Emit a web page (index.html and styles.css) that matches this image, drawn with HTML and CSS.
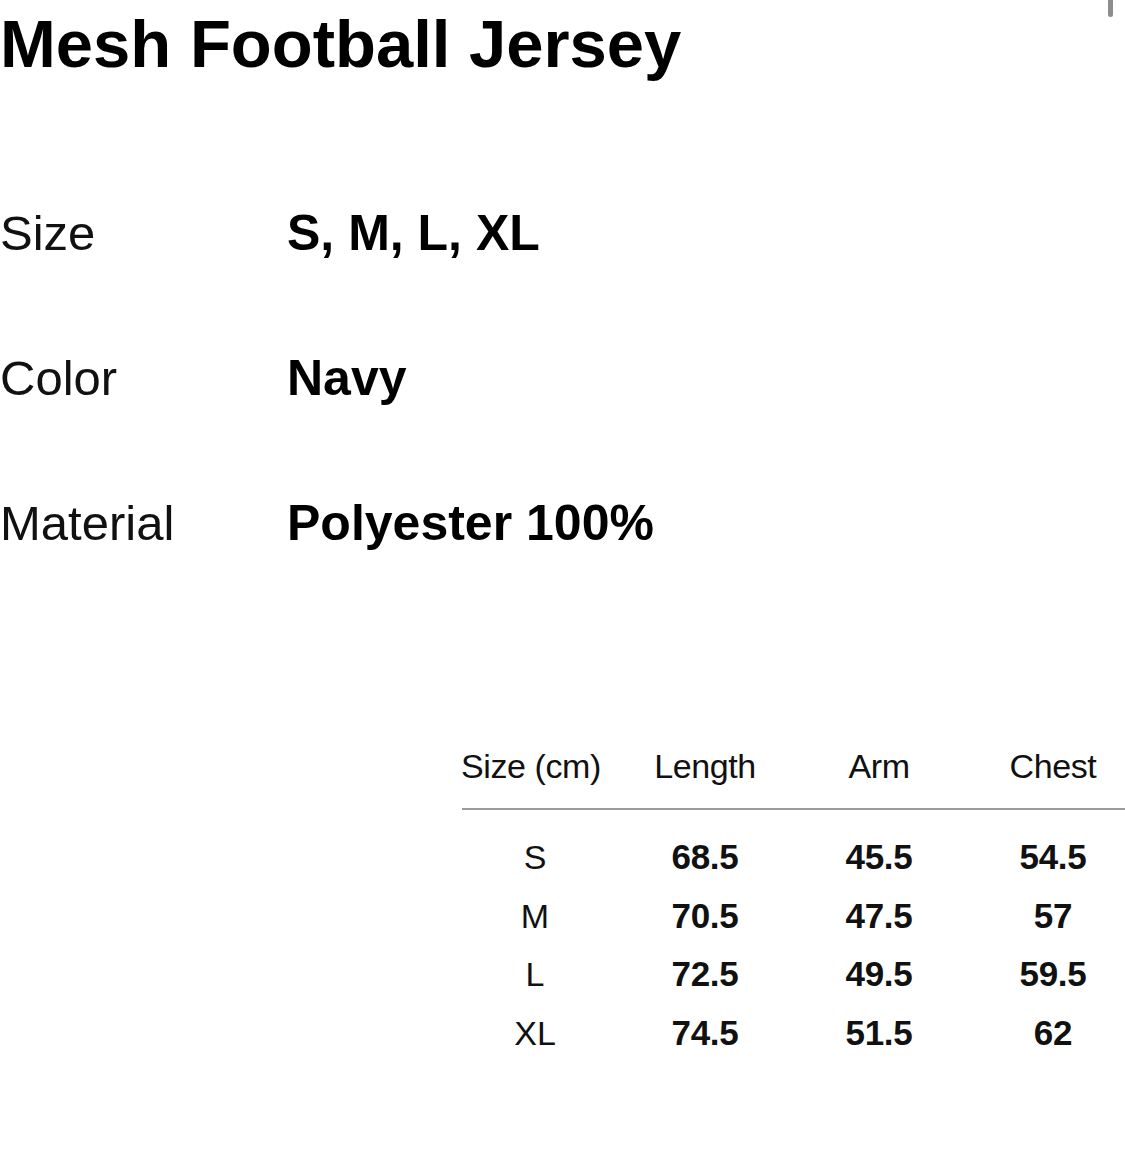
FILE: index.html
```html
<!DOCTYPE html>
<html lang="en">
<head>
<meta charset="utf-8">
<title>Mesh Football Jersey</title>
<link rel="stylesheet" href="styles.css">
</head>
<body>
<div class="scroll-indicator"></div>
<main class="page">
  <h1 class="title">Mesh Football Jersey</h1>

  <dl class="specs">
    <div class="spec-row">
      <dt class="spec-label">Size</dt>
      <dd class="spec-value">S, M, L, XL</dd>
    </div>
    <div class="spec-row">
      <dt class="spec-label">Color</dt>
      <dd class="spec-value">Navy</dd>
    </div>
    <div class="spec-row">
      <dt class="spec-label">Material</dt>
      <dd class="spec-value">Polyester 100%</dd>
    </div>
  </dl>

  <section class="size-table">
    <div class="table-row table-head">
      <div class="cell">Size (cm)</div>
      <div class="cell">Length</div>
      <div class="cell">Arm</div>
      <div class="cell">Chest</div>
    </div>
    <div class="divider"></div>
    <div class="table-row">
      <div class="cell size">S</div>
      <div class="cell num">68.5</div>
      <div class="cell num">45.5</div>
      <div class="cell num">54.5</div>
    </div>
    <div class="table-row">
      <div class="cell size">M</div>
      <div class="cell num">70.5</div>
      <div class="cell num">47.5</div>
      <div class="cell num">57</div>
    </div>
    <div class="table-row">
      <div class="cell size">L</div>
      <div class="cell num">72.5</div>
      <div class="cell num">49.5</div>
      <div class="cell num">59.5</div>
    </div>
    <div class="table-row">
      <div class="cell size">XL</div>
      <div class="cell num">74.5</div>
      <div class="cell num">51.5</div>
      <div class="cell num">62</div>
    </div>
  </section>
</main>
</body>
</html>
```

FILE: styles.css
```css
html {
  overflow: hidden;
  background: #fff;
}

body {
  margin: 0;
  background: #fff;
  color: #000;
  font-family: "Liberation Sans", Arial, Helvetica, sans-serif;
}

.scroll-indicator {
  position: absolute;
  top: 0;
  right: 12px;
  width: 5px;
  height: 17px;
  border-radius: 0 0 3px 3px;
  background: #8d8d8d;
}

.page {
  width: 1125px;
}

.title {
  margin: 10px 0 0 0;
  font-size: 67px;
  line-height: 67px;
  font-weight: 700;
  letter-spacing: 0;
}

.specs {
  margin: 84px 0 0 0;
  padding: 0;
}

.spec-row {
  display: flex;
  align-items: baseline;
  height: 145px;
  line-height: 145px;
}

.spec-label {
  width: 287px;
  margin: 0;
  font-size: 49px;
  font-weight: 400;
  color: #111;
  letter-spacing: 0;
}

.spec-value {
  margin: 0;
  font-size: 50px;
  font-weight: 700;
  letter-spacing: 0;
}

.size-table {
  margin: 141px 0 0 444px;
  width: 681px;
}

.table-row {
  display: grid;
  grid-template-columns: repeat(4, 174px);
  height: 58.7px;
  line-height: 58.7px;
  font-size: 34px;
  color: #111;
}

.table-head {
  height: 58px;
  line-height: 58px;
  letter-spacing: -0.4px;
}

.cell {
  text-align: center;
  white-space: nowrap;
}

.cell.size {
  padding-left: 8px;
  font-weight: 400;
}

.cell.num {
  font-size: 35px;
  font-weight: 700;
  letter-spacing: -0.3px;
}

.divider {
  margin: 13px 0 18px 18px;
  height: 2px;
  background: #9b9b9b;
}
```
